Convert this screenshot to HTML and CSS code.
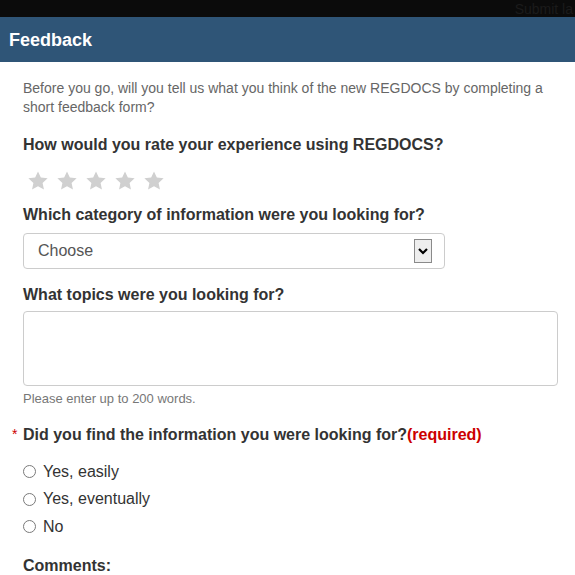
FILE: index.html
```html
<!DOCTYPE html>
<html>
<head>
<meta charset="utf-8">
<link rel="stylesheet" href="styles.css">
</head>
<body>
<div class="topbar"><span class="topbar-text">Submit la</span></div>
<div class="header">Feedback</div>
<div class="content">
  <p class="intro">Before you go, will you tell us what you think of the new REGDOCS by completing a short feedback form?</p>
  <h2 class="q q-first">How would you rate your experience using REGDOCS?</h2>
  <div class="stars">
    <svg class="star" viewBox="0 0 24 24"><polygon points="12,1.5 15.1,8.3 22.5,9.1 17,14.1 18.5,21.4 12,17.7 5.5,21.4 7,14.1 1.5,9.1 8.9,8.3"/></svg>
    <svg class="star" viewBox="0 0 24 24"><polygon points="12,1.5 15.1,8.3 22.5,9.1 17,14.1 18.5,21.4 12,17.7 5.5,21.4 7,14.1 1.5,9.1 8.9,8.3"/></svg>
    <svg class="star" viewBox="0 0 24 24"><polygon points="12,1.5 15.1,8.3 22.5,9.1 17,14.1 18.5,21.4 12,17.7 5.5,21.4 7,14.1 1.5,9.1 8.9,8.3"/></svg>
    <svg class="star" viewBox="0 0 24 24"><polygon points="12,1.5 15.1,8.3 22.5,9.1 17,14.1 18.5,21.4 12,17.7 5.5,21.4 7,14.1 1.5,9.1 8.9,8.3"/></svg>
    <svg class="star" viewBox="0 0 24 24"><polygon points="12,1.5 15.1,8.3 22.5,9.1 17,14.1 18.5,21.4 12,17.7 5.5,21.4 7,14.1 1.5,9.1 8.9,8.3"/></svg>
  </div>
  <h2 class="q q-cat">Which category of information were you looking for?</h2>
  <div class="select">
    <span class="select-value">Choose</span>
    <span class="select-arrow"><svg viewBox="0 0 16 22" width="16" height="22"><polyline points="4,9 8,13 12,9" fill="none" stroke="#000" stroke-width="2.2"/></svg></span>
  </div>
  <h2 class="q q-topics">What topics were you looking for?</h2>
  <div class="textarea"></div>
  <p class="help">Please enter up to 200 words.</p>
  <h2 class="q q-req"><span class="asterisk">*</span>Did you find the information you were looking for?<span class="required">(required)</span></h2>
  <div class="radios">
    <div class="radio"><span class="circle"></span><span>Yes, easily</span></div>
    <div class="radio"><span class="circle"></span><span>Yes, eventually</span></div>
    <div class="radio"><span class="circle"></span><span>No</span></div>
  </div>
  <h2 class="q q-comments">Comments:</h2>
</div>
</body>
</html>
```
FILE: styles.css
```css
* { box-sizing: border-box; }
html, body { margin: 0; padding: 0; background: #fff; }
body {
  font-family: "Liberation Sans", Arial, sans-serif;
  color: #333;
  overflow: hidden;
}
.topbar {
  height: 17px;
  background: #0b0b0b;
  display: flex;
  justify-content: flex-end;
  align-items: center;
  overflow: hidden;
}
.topbar-text {
  color: #1b1b1b;
  font-size: 14px;
  margin-right: 2px;
  white-space: nowrap;
}
.header {
  height: 45px;
  background: #2f5577;
  color: #fff;
  font-weight: bold;
  font-size: 18px;
  padding-left: 9px;
  padding-top: 2px;
  display: flex;
  align-items: center;
}
.content {
  padding: 17px 17px 0 23px;
}
.intro {
  margin: 0;
  font-size: 14px;
  line-height: 19px;
  color: #666;
}
.q {
  margin: 0;
  font-size: 16px;
  line-height: 20px;
  font-weight: bold;
  color: #333;
}
.q-first { margin-top: 18px; }
.stars {
  display: flex;
  gap: 7px;
  margin-top: 16px;
  padding-left: 4px;
  height: 20px;
  align-items: center;
}
.star {
  width: 22px;
  height: 22px;
  fill: #d0d0d0;
}
.q-cat { margin-top: 14px; }
.select {
  margin-top: 8px;
  width: 422px;
  height: 36px;
  border: 1px solid #ccc;
  border-radius: 4px;
  display: flex;
  align-items: center;
  justify-content: space-between;
  padding: 0 12px 0 14px;
  font-size: 16px;
  color: #555;
}
.select-arrow {
  width: 18px;
  height: 24px;
  border: 1px solid #8a8a8a;
  background: #eeeeee;
  display: flex;
  align-items: center;
  justify-content: center;
}
.select-arrow svg { display: block; }
.q-topics { margin-top: 16px; }
.textarea {
  margin-top: 6px;
  height: 75px;
  border: 1px solid #ccc;
  border-radius: 4px;
}
.help {
  margin: 4px 0 0;
  font-size: 13px;
  line-height: 18px;
  color: #777;
}
.q-req { margin-top: 17px; }
.asterisk {
  display: inline-block;
  width: 11px;
  margin-left: -11px;
  color: #c00;
  font-weight: normal;
  font-size: 14px;
  vertical-align: top;
  position: relative;
  top: -1px;
}
.required { color: #c00; }
.radios {
  margin-top: 13px;
  display: flex;
  flex-direction: column;
}
.radio {
  height: 27.5px;
  display: flex;
  align-items: center;
  font-size: 16px;
  color: #333;
}
.circle {
  width: 13px;
  height: 13px;
  border: 1px solid #7a7a7a;
  border-radius: 50%;
  margin-right: 7px;
  background: #fff;
}
.q-comments { margin-top: 15px; }
```
